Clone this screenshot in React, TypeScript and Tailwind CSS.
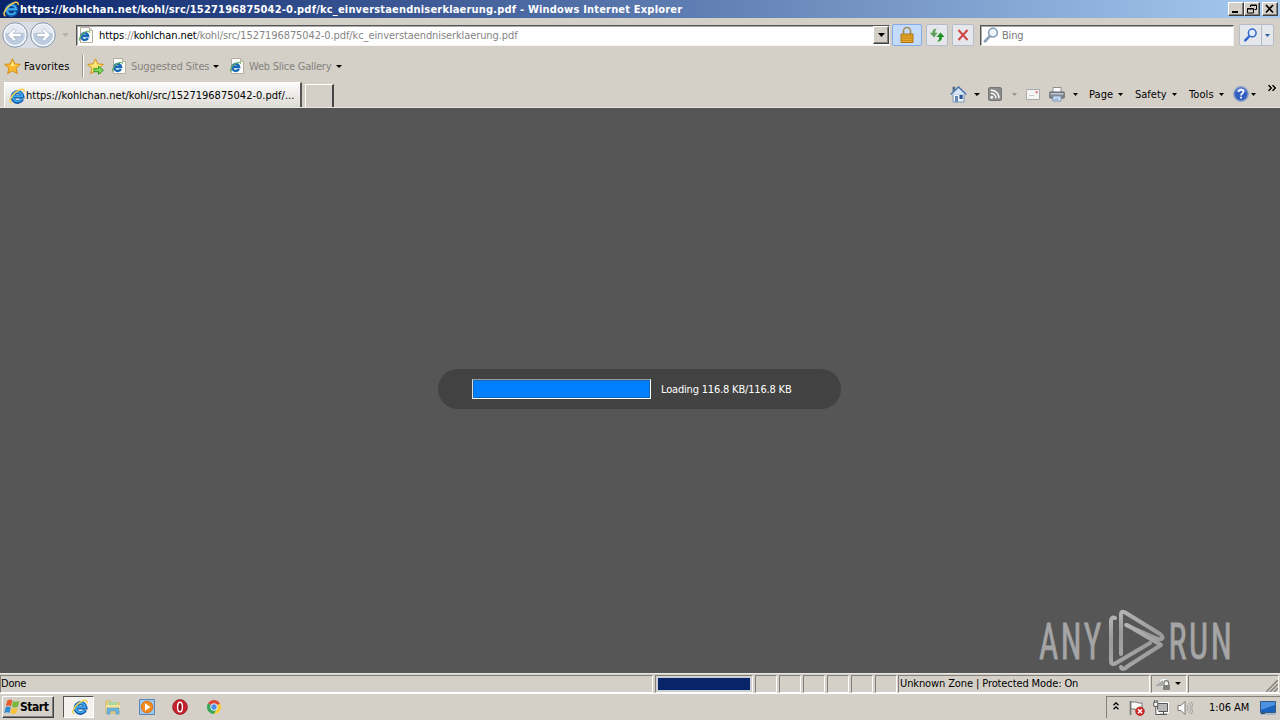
import type { ReactNode } from 'react';
import clsx from 'clsx';

type IconProps = { className?: string };

function IeLogo({ className }: IconProps) {
  return (
    <svg viewBox="0 0 16 16" className={clsx('shrink-0', className)}>
      <path d="M13.2 11A5 5 0 1 1 13.6 8.6H5" fill="none" stroke="#155aa8" strokeWidth="3.8" />
      <path d="M12.6 11A4.7 4.7 0 1 1 13.2 8.3H5" fill="none" stroke="#3fa9ee" strokeWidth="1.9" />
      <path
        d="M2.6 15C-1 14 2 8 6.6 4.4 10.4 1.4 15.8-.6 15 4"
        fill="none"
        stroke="#f0d052"
        strokeWidth="1.5"
      />
    </svg>
  );
}

function PageIcon({ className }: IconProps) {
  return (
    <svg viewBox="0 0 16 16" className={clsx('shrink-0', className)}>
      <path d="M2.5.5h9l3 3v12h-12z" fill="#fdfdfb" stroke="#b5ae9e" />
      <path d="M11.5.5v3h3" fill="#ddd" stroke="#b5ae9e" />
      <path d="M9.9 11A3.5 3.5 0 1 1 10.2 9H4" fill="none" stroke="#1769b8" strokeWidth="2.3" />
      <path d="M1.8 13.6C.2 12 3.4 7.2 6.9 5.2c2.4-1.3 5-1.6 4.6.6" fill="none" stroke="#6db35c" strokeWidth="1.1" />
    </svg>
  );
}

function Star({ arrow = false, className }: IconProps & { arrow?: boolean }) {
  return (
    <svg viewBox="0 0 16 16" className={clsx('shrink-0', className)}>
      <path
        d="m8 .8 2.1 4.7 5.3.5-4 3.5 1.2 5.2L8 12l-4.6 2.7 1.2-5.2L.6 6l5.3-.5z"
        fill={arrow ? '#ffe46b' : '#fdb92a'}
        stroke="#d08a16"
        strokeWidth=".9"
      />
      <path d="m8 2.8 1.4 3.6 3.6.4-6.8 1z" fill="#ffe98a" />
      {arrow && <path d="M6.5 10h4.3V7.6l4.7 3.9-4.7 3.9v-2.5H6.5z" fill="#7ed65c" stroke="#2b8d26" strokeWidth=".8" />}
    </svg>
  );
}

function Caret({ className }: IconProps) {
  return (
    <svg viewBox="0 0 6 3" preserveAspectRatio="none" className={clsx('shrink-0', className ?? 'h-[3px] w-[6px]')}>
      <path d="M0 0h6L3 3z" fill="currentColor" />
    </svg>
  );
}

function NavArrow({ flip = false }: { flip?: boolean }) {
  return (
    <svg viewBox="0 0 26 26" className={clsx('h-[26px] w-[26px] shrink-0', flip && '-scale-x-100')}>
      <circle cx="13" cy="13" r="12.3" fill="#e9eef4" stroke="#8592a5" strokeWidth="1" />
      <circle cx="13" cy="13" r="10.5" fill="#bccbdf" stroke="#f4f8fc" strokeWidth="1.2" />
      <path d="M3.5 11a9.6 9.6 0 0 1 19 0z" fill="#e2e9f2" />
      <path
        d="M5.5 13 12 6.7l2 2-2.6 2.6h8v3.4h-8l2.6 2.6-2 2z"
        fill="#fff"
        stroke="#99a9c0"
        strokeWidth=".7"
      />
    </svg>
  );
}

function Magnifier({ className, stroke = '#8ba3b8', fill = '#eff5fa' }: IconProps & { stroke?: string; fill?: string }) {
  return (
    <svg viewBox="0 0 16 16" className={clsx('shrink-0', className)}>
      <path d="M6.6 9.4 2 14.2" stroke={stroke} strokeWidth="2.8" strokeLinecap="round" />
      <circle cx="10" cy="5.6" r="4.4" fill={fill} stroke={stroke} strokeWidth="1.7" />
    </svg>
  );
}

function ToolButton({
  active = false,
  className,
  children,
}: {
  active?: boolean;
  className?: string;
  children: ReactNode;
}) {
  return (
    <div
      className={clsx(
        'flex h-[22px] shrink-0 items-center justify-center rounded-[2px] border',
        active ? 'border-[#82ade8] bg-[#c5dbfb]' : 'border-[#b4bcc9] bg-[#e5e7eb]',
        className,
      )}
    >
      {children}
    </div>
  );
}

function WindowButton({ className, children }: { className?: string; children: ReactNode }) {
  return (
    <div
      className={clsx(
        'flex h-[14px] w-[16px] items-center justify-center border border-t-white border-r-[#404040] border-b-[#404040] border-l-white bg-[#d4d0c8] shadow-[inset_-1px_-1px_0_#808080]',
        className,
      )}
    >
      <svg viewBox="0 0 12 10" className="h-[10px] w-[12px]">
        {children}
      </svg>
    </div>
  );
}

function TitleBar() {
  return (
    <header className="flex h-[18px] items-center bg-[linear-gradient(90deg,#0a246a,#a6caf0)] pr-[2px] pl-[3px] text-white">
      <IeLogo className="h-4 w-4" />
      <h1 className="ml-[1px] text-[11px] font-bold tracking-[0.19px] whitespace-nowrap">
        https://kohlchan.net/kohl/src/1527196875042-0.pdf/kc_einverstaendniserklaerung.pdf - Windows Internet Explorer
      </h1>
      <div className="ml-auto flex text-black">
        <WindowButton>
          <path d="M2 7h6v2H2z" />
        </WindowButton>
        <WindowButton>
          <path d="M4.5 3V1h6v4.5h-2M4 1.5h7M1.5 4.5h6V9h-6zM1.5 5h6" fill="none" stroke="#000" />
        </WindowButton>
        <WindowButton className="ml-[2px]">
          <path d="m2 1 7 7.5M9 1 2 8.5" stroke="#000" strokeWidth="1.7" />
        </WindowButton>
      </div>
    </header>
  );
}

function AddressRow() {
  return (
    <div className="flex h-[32px] items-center pt-[2px] pl-[2px]">
      <div className="flex rounded-full bg-[#d9dde4]">
        <NavArrow />
        <div className="ml-[2px]">
          <NavArrow flip />
        </div>
      </div>
      <Caret className="ml-[6px] h-[4px] w-[7px] text-[#b5b1aa]" />
      <div className="ml-[7px] flex h-[21px] w-[814px] items-center border border-t-[#555] border-r-[#eee] border-b-[#f5f4f1] border-l-[#555] bg-white pl-[1px] shadow-[inset_1px_1px_0_#aaa]">
        <PageIcon className="h-4 w-4" />
        <p className="ml-[5px] text-[11px] tracking-[-0.097px] whitespace-nowrap text-[#858585]">
          <span className="text-black">https</span>://<span className="text-black">kohlchan.net</span>
          /kohl/src/1527196875042-0.pdf/kc_einverstaendniserklaerung.pdf
        </p>
        <div className="ml-auto flex h-[18px] w-[16px] items-center justify-center border border-t-white border-r-[#404040] border-b-[#404040] border-l-white bg-[#d4d0c8] shadow-[inset_-1px_-1px_0_#808080]">
          <Caret className="h-[4px] w-[7px]" />
        </div>
      </div>
      <ToolButton active className="ml-[2px] w-[30px]">
        <svg viewBox="0 0 16 18" className="h-[18px] w-[16px]">
          <path d="M4.5 8V5a3.5 3.5 0 0 1 7 0v3" fill="none" stroke="#a18b50" strokeWidth="1.6" />
          <path d="M2 8h12v8.5H2z" fill="#e7aa2c" stroke="#a87412" />
          <path d="M2.5 10h11M2.5 12.2h11M2.5 14.4h11" stroke="#ba7f15" strokeWidth=".8" />
        </svg>
      </ToolButton>
      <ToolButton className="ml-[4px] w-[22px]">
        <svg viewBox="0 0 16 16" className="h-4 w-4">
          <path d="M7.8 1.5c-3.2.2-4.6 2-4.4 4.3H.8L5 10.4l3.7-4.6H6.1c0-1.9.5-3 1.7-4.3z" fill="#5f9f5e" />
          <path d="M8.2 14.8c3.6-.3 4.9-2.4 4.7-4.8h2.6l-4-4.6L7.6 10h2.6c.1 2-.7 3.6-2 4.8z" fill="#1f9122" />
        </svg>
      </ToolButton>
      <ToolButton className="ml-[4px] w-[22px]">
        <svg viewBox="0 0 12 12" className="h-3 w-3">
          <path d="m1.5 1 9 10M10.5 1l-9 10" stroke="#d04444" strokeWidth="2" />
        </svg>
      </ToolButton>
      <div className="ml-[6px] flex h-[21px] w-[254px] items-center border border-t-[#555] border-r-[#eee] border-b-[#f5f4f1] border-l-[#555] bg-white pl-[2px] shadow-[inset_1px_1px_0_#aaa]">
        <Magnifier className="h-4 w-4" />
        <span className="ml-[3px] text-[11px] tracking-[-0.2px] text-[#777]">Bing</span>
      </div>
      <ToolButton className="ml-[5px] w-[35px]">
        <Magnifier className="h-[14px] w-[15px]" stroke="#2f68ca" fill="#e1edff" />
        <div className="ml-[3px] flex h-full items-center border-l border-[#b4bcc9] pl-[3px]">
          <Caret className="h-[3px] w-[5px] text-[#315e9c]" />
        </div>
      </ToolButton>
    </div>
  );
}

function FavoritesRow() {
  return (
    <div className="flex h-[32px] items-center pl-[4px] text-[11px]">
      <Star className="h-[17px] w-[17px]" />
      <span className="ml-[3px] w-[46px] tracking-[0.1px]">Favorites</span>
      <div className="ml-[12px] h-[22px] w-[2px] border-l border-[#99958e] bg-white" />
      <Star arrow className="ml-[3px] h-[17px] w-[17px]" />
      <PageIcon className="ml-[7px] h-4 w-4" />
      <span className="ml-[4px] w-[78px] tracking-[-0.1px] whitespace-nowrap text-[#85827d]">Suggested Sites</span>
      <Caret className="ml-[4px] h-[3px] w-[6px]" />
      <PageIcon className="ml-[10px] h-4 w-4" />
      <span className="ml-[4px] w-[82px] tracking-[-0.24px] whitespace-nowrap text-[#85827d]">Web Slice Gallery</span>
      <Caret className="ml-[5px] h-[3px] w-[6px]" />
    </div>
  );
}

function CommandBar() {
  return (
    <div className="mb-[1px] flex h-[24px] w-[330px] items-center text-[11px]">
      <svg viewBox="0 0 17 17" className="h-[17px] w-[17px]">
        <path d="M3 8h11v8H3z" fill="#eef3f8" stroke="#7d96b5" />
        <path d="M.8 8.5 8.5 1l7.7 7.5" fill="#d8e7f7" stroke="#4d76ad" strokeWidth="1.6" />
        <path d="M2.5.8h2.7v3l-2.7 2z" fill="#596f92" />
        <path d="M9.5 9h3.2v4H9.5z" fill="#2b559a" />
        <path d="M5 10h3v6H5z" fill="#628ab9" />
      </svg>
      <Caret className="ml-[7px] h-[3px] w-[6px]" />
      <svg viewBox="0 0 14 14" className="ml-[8px] h-[14px] w-[14px]">
        <rect x=".5" y=".5" width="13" height="13" rx="1.5" fill="#8c8c8a" stroke="#777" />
        <circle cx="3.8" cy="10.3" r="1.4" fill="#fff" />
        <path d="M2.8 6.2a5 5 0 0 1 5.2 5.1M2.8 3.2a8 8 0 0 1 8.3 8.1" fill="none" stroke="#fff" strokeWidth="1.4" />
      </svg>
      <Caret className="ml-[10px] h-[3px] w-[5px] text-[#99958f]" />
      <svg viewBox="0 0 14 11" className="ml-[9px] h-[11px] w-[14px]">
        <path d="M.5.5h13v10H.5z" fill="#f4f4f4" stroke="#aaa" />
        <path d="M9.5 2.2h2.2v2H9.5z" fill="#d77575" />
        <path d="M3 6.5h5" stroke="#ccc" />
      </svg>
      <svg viewBox="0 0 16 16" className="ml-[9px] h-4 w-4">
        <path d="M4 1.5h8V7H4z" fill="#fafafa" stroke="#8d8d8d" />
        <path d="M.8 6h14.4v6H.8z" fill="#858b93" stroke="#60656c" />
        <path d="M1.5 7h13v1.5h-13z" fill="#bfc4ca" />
        <path d="M4 10h8v5H4z" fill="#e5f2ff" stroke="#718bab" />
        <path d="M5.5 12h5M5.5 13.5h4" stroke="#5b8dc8" strokeWidth=".7" />
      </svg>
      <Caret className="ml-[8px] h-[3px] w-[5px]" />
      <span className="ml-[11px] w-[25px] tracking-[0.05px]">Page</span>
      <Caret className="ml-[4px] h-[3px] w-[5px]" />
      <span className="ml-[12px] w-[33px]">Safety</span>
      <Caret className="ml-[4px] h-[3px] w-[5px]" />
      <span className="ml-[12px] w-[26px] tracking-[0.1px]">Tools</span>
      <Caret className="ml-[4px] h-[3px] w-[5px]" />
      <svg viewBox="0 0 16 16" className="ml-[9px] h-4 w-4">
        <circle cx="8" cy="8" r="7.2" fill="#315fc0" stroke="#8a9fc6" strokeWidth="1.4" />
        <path d="M3 5.5a5.5 5.5 0 0 1 10 0z" fill="#7798dd" />
        <path d="M5.6 6c0-3.3 5-3.1 4.9-.2C10.4 7.3 8 7.5 8 9.5" fill="none" stroke="#fff" strokeWidth="1.7" />
        <path d="M7.1 10.8h1.8v1.8H7.1z" fill="#fff" />
      </svg>
      <Caret className="ml-[2px] h-[3px] w-[5px]" />
      <svg viewBox="0 0 8 6" className="mb-[12px] ml-[12px] h-[6px] w-[8px]">
        <path d="m.5 0 2.7 3L.5 6M4.5 0l2.7 3-2.7 3" fill="none" stroke="#000" strokeWidth="1.4" />
      </svg>
    </div>
  );
}

function TabRow() {
  return (
    <div className="flex h-[26px] items-end border-b border-[#e7e5e0]">
      <div className="ml-[4px] flex h-[25px] w-[298px] items-center border-t border-r-2 border-l border-t-white border-r-[#555] border-l-white bg-gradient-to-b from-[#fbfbfa] to-[#dedbd5] pt-[1px] pl-[4px]">
        <IeLogo className="h-4 w-4" />
        <span className="ml-[1px] text-[11px] tracking-[0.01px] whitespace-nowrap">
          https://kohlchan.net/kohl/src/1527196875042-0.pdf/...
        </span>
      </div>
      <div className="ml-[3px] h-[23px] w-[29px] border-t border-r-2 border-l border-t-white border-r-[#454545] border-l-white" />
      <div className="ml-auto">
        <CommandBar />
      </div>
    </div>
  );
}

function Watermark() {
  return (
    <svg viewBox="0 0 200 62" className="absolute right-[42px] bottom-[1px] h-[62px] w-[200px] overflow-visible">
      <defs>
        <linearGradient id="metal" x1="0" y1="0" x2="0" y2="1">
          <stop offset="0" stopColor="#b3b3b3" />
          <stop offset=".5" stopColor="#9b9b9b" />
          <stop offset="1" stopColor="#a5a5a5" />
        </linearGradient>
      </defs>
      <g fill="#a5a5a5" stroke="#a5a5a5" strokeWidth=".8" fontFamily="Roboto" fontSize="50">
        <text transform="translate(1 49) scale(.67 1)" textLength="93">ANY</text>
        <text transform="translate(130.5 49) scale(.68 1)" textLength="93">RUN</text>
      </g>
      <g fill="none" stroke="url(#metal)" strokeWidth="4" strokeLinecap="round" strokeLinejoin="round">
        <path d="M77 8c-2-1-4 0-4 3v40c0 3 2 4 5 2l34-20" />
        <path d="M83 44V5c0-4 2-4 5-2l34 21c4 3 3 6-2 5L88 15" />
        <path d="m120 33 3 2-33 21c-3 3-6 4-7 1M123 35l-34-20" />
      </g>
    </svg>
  );
}

function LoadingPill() {
  return (
    <div className="flex h-[40px] w-[403px] items-center rounded-full bg-[#424242] pl-[34px]">
      <div className="h-[20px] w-[179px] border border-t-[#9b9b9b] border-r-white border-b-white border-l-[#ddd] bg-[#0080ff] shadow-[inset_0_0_0_1px_#1269bb]" />
      <span className="ml-[10px] text-[11px] tracking-[-0.18px] whitespace-nowrap text-white">
        Loading 116.8 KB/116.8 KB
      </span>
    </div>
  );
}

function StatusCell({ className, children }: { className?: string; children?: ReactNode }) {
  return (
    <div
      className={clsx(
        'flex h-[18px] shrink-0 items-center border border-t-[#85817a] border-r-white border-b-white border-l-[#85817a]',
        className,
      )}
    >
      {children}
    </div>
  );
}

function StatusBar() {
  return (
    <div className="flex h-[20px] items-center border-t border-[#e9e7e2] text-[11px]">
      <StatusCell className="w-[653px]">
        <span className="tracking-[-0.2px]">Done</span>
      </StatusCell>
      <StatusCell className="ml-[2px] w-[98px] pl-[1px]">
        <div className="h-[14px] w-[94px] border border-[#c5cedd] bg-[#0a246a]" />
      </StatusCell>
      {[1, 2, 3, 4, 5, 6].map((cell) => (
        <StatusCell key={cell} className="ml-[2px] w-[22px]" />
      ))}
      <StatusCell className="ml-[1px] w-[252px] pl-[1px]">
        <span className="tracking-[-0.11px] whitespace-nowrap">Unknown Zone | Protected Mode: On</span>
      </StatusCell>
      <StatusCell className="ml-[1px] w-[36px] pl-[3px]">
        <svg viewBox="0 0 17 16" className="h-4 w-[17px]">
          <circle cx="9" cy="7" r="5" fill="#f4f4f3" stroke="#c5c5c5" />
          <path d="m0 10 8-6v6z" fill="#aaa" />
          <path d="M9 9V7a2.3 2.3 0 0 1 4.6 0v2" fill="none" stroke="#777" strokeWidth="1.2" />
          <path d="M8 9h7v5H8z" fill="#81817e" />
        </svg>
        <Caret className="ml-[3px] h-[3px] w-[6px]" />
      </StatusCell>
      <StatusCell className="ml-[1px] w-[91px] justify-end">
        <svg viewBox="0 0 12 12" className="mt-[5px] h-3 w-3">
          <path d="M0 12 12 0M4 12l8-8M8 12l4-4" stroke="#85817a" strokeWidth="1.5" />
        </svg>
      </StatusCell>
    </div>
  );
}

function Tray() {
  return (
    <div className="ml-auto flex h-[22px] w-[174px] items-center border-t border-l border-[#85817a] pl-[6px] text-[11px]">
      <svg viewBox="0 0 6 8" className="mb-[4px] h-[8px] w-[6px]">
        <path d="m.5 3.3 2.5-2.5 2.5 2.5M.5 7.3 3 4.8l2.5 2.5" fill="none" stroke="#000" strokeWidth="1.3" />
      </svg>
      <svg viewBox="0 0 16 16" className="ml-[10px] h-4 w-4">
        <path d="M1.5 1v14" stroke="#777" strokeWidth="1.6" />
        <path d="M2 2h6l1 1h4v7H7L6 9H2z" fill="#fafafa" stroke="#777" />
        <circle cx="11" cy="11.2" r="4.3" fill="#d62727" stroke="#a91c1c" strokeWidth=".7" />
        <path d="m9 9.2 4 4m0-4-4 4" stroke="#fff" strokeWidth="1.5" />
      </svg>
      <svg viewBox="0 0 16 16" className="ml-[8px] h-4 w-4">
        <path d="M4 3.5h11v8H4z" fill="#aaa" stroke="#fff" strokeWidth="2.8" />
        <path d="M4.5 3.5h10v8h-10zM7 14.5h7M10.5 11.5v3" fill="#b8b8b8" stroke="#555" />
        <path d="M.8 2.2h4v4.1h-4zM2.8 6.5v8H7M1.5 0v2M4 0v2" fill="#fff" stroke="#555" />
      </svg>
      <svg viewBox="0 0 16 16" className="ml-[8px] h-4 w-4">
        <path d="M1 5.5h3L8 1.5v13l-4-4H1z" fill="#fafafa" stroke="#777" />
        <path d="M10 5c1.5 2 1.5 4 0 6M12 3c2.8 3.3 2.8 6.7 0 10M14 1.8c3 4 3 8.4 0 12.4" fill="none" stroke="#999" />
      </svg>
      <span className="ml-[16px] w-[41px] tracking-[-0.05px] whitespace-nowrap">1:06 AM</span>
      <svg viewBox="0 0 16 14" className="ml-[10px] h-[14px] w-4">
        <path d="M.5.5h15v11H.5z" fill="#1b62bd" stroke="#355981" />
        <path d="M1 1h14v3L1 9z" fill="#4b91df" />
        <path d="M0 12h16v2H0z" fill="#a4b7cc" />
        <path d="M1 12h4v1H1z" fill="#334f70" />
      </svg>
    </div>
  );
}

function Taskbar() {
  return (
    <footer className="flex h-[27px] items-center border-t border-white bg-[#d4d0c8] pl-[2px]">
      <button className="flex h-[22px] w-[52px] items-center border border-t-white border-r-[#404040] border-b-[#404040] border-l-white pl-[1px] text-[12px] font-bold shadow-[inset_-1px_-1px_0_#808080]">
        <svg viewBox="0 0 16 16" className="h-4 w-4 shrink-0">
          <path d="M3.3 1.5c2.2-1.2 3.6-1.2 5 0L7 7.3c-2-1-3.5-1-5.2 0z" fill="#e65d2c" />
          <path d="M9 2c2 1 4 1 6.5-.3L14 7.5c-2 1.2-4.2 1.2-6.2 0z" fill="#78b83d" />
          <path d="M1.6 8.3c1.8-1 3.4-1 5.2 0L5.5 14c-1.8-1-3.5-1-5.3 0z" fill="#328bd0" />
          <path d="M7.6 8.7c2 1.1 4 1.1 6.2 0L12.4 14c-2 1.2-4.1 1.2-6.1 0z" fill="#f6c23b" />
        </svg>
        <span className="tracking-[-0.45px]">Start</span>
      </button>
      <div className="ml-[9px] flex h-[22px] w-[31px] items-center justify-center border border-t-[#555] border-r-white border-b-white border-l-[#555] bg-[#f4f2ef] pl-[2px]">
        <IeLogo className="h-4 w-4" />
      </div>
      <svg viewBox="0 0 16 16" className="ml-[11px] h-4 w-4">
        <path d="M1 2h5l1 1.5h7V14H1z" fill="#f2d66f" stroke="#cdb46a" strokeWidth=".8" />
        <path d="M3 3h9v5H3z" fill="#a7d8a5" />
        <path d="M1 6h14v6H1z" fill="#f6e39b" />
        <path d="M2 15V9h12v6h-3v-3H5v3z" fill="#6db5df" stroke="#4f93bf" strokeWidth=".6" />
      </svg>
      <svg viewBox="0 0 16 16" className="ml-[18px] h-4 w-4">
        <path d="M.5.5h15v15H.5z" fill="#9fc8ec" stroke="#5687b7" />
        <circle cx="8" cy="8" r="5.8" fill="#f28b20" stroke="#d8751b" />
        <path d="m6 4.3 5.3 3.7L6 11.7z" fill="#fff" />
      </svg>
      <svg viewBox="0 0 16 16" className="ml-[17px] h-4 w-4">
        <circle cx="8" cy="8" r="7.4" fill="#c6212d" stroke="#8d161e" strokeWidth=".7" />
        <ellipse cx="8" cy="8" rx="2.4" ry="4.8" fill="#8c101b" stroke="#fff" strokeWidth="1.4" />
      </svg>
      <svg viewBox="0 0 16 16" className="ml-[18px] h-4 w-4">
        <path d="M8 8 1.9 4.5A7 7 0 0 1 14.1 4.5z" fill="#df4937" />
        <path d="M8 8 1.9 4.5A7 7 0 0 0 8 15l3-5.2z" fill="#37a65a" />
        <path d="m8 8 6.1-3.5A7 7 0 0 1 8 15l3-5.2z" fill="#fbcb36" />
        <circle cx="8" cy="8" r="3.3" fill="#4b8dea" stroke="#fff" strokeWidth=".9" />
      </svg>
      <Tray />
    </footer>
  );
}

export default function App() {
  return (
    <div className="flex h-[720px] w-[1280px] flex-col overflow-hidden bg-[#d4d0c8] font-['DejaVu_Sans_Condensed','DejaVu_Sans',sans-serif] leading-none text-black [font-stretch:condensed]">
      <TitleBar />
      <AddressRow />
      <FavoritesRow />
      <TabRow />
      <main className="relative flex h-[565px] items-center justify-center bg-[#565656] pr-[1px] pb-[3px]">
        <LoadingPill />
        <Watermark />
      </main>
      <StatusBar />
      <Taskbar />
    </div>
  );
}
